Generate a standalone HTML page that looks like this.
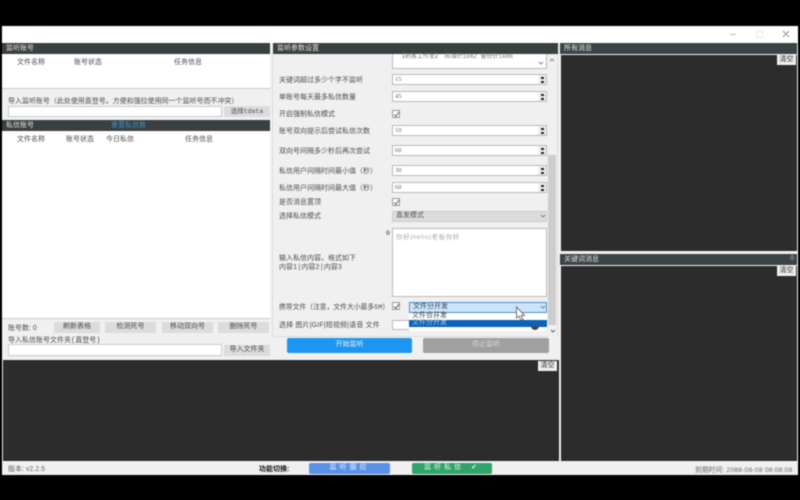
<!DOCTYPE html>
<html lang="zh"><head><meta charset="utf-8"><title>监听</title>
<style>
html,body{margin:0;padding:0;background:#000}
body{width:800px;height:500px;overflow:hidden;position:relative;font-family:"Liberation Mono","Noto Sans CJK SC",sans-serif;font-size:7px;color:#4d4d4d}
#w{position:absolute;left:0;top:0;width:800px;height:500px;filter:blur(.5px)}
.a{position:absolute;box-sizing:border-box;white-space:nowrap}
.s{font-family:"Liberation Sans","Noto Sans CJK SC",sans-serif}
.h{background:#3a3f41;color:#e2e2e2;line-height:12px;height:11px;padding-left:4px;font-size:7px;overflow:hidden}
.white{background:#fff;border:1px solid #ccc}
.btn{background:#dcdcdc;color:#4d4d4d;text-align:center;line-height:11px;height:11px}
.dark{background:#2c2c2c}
.in{background:#fff;border:1px solid #bbb;height:11px;line-height:9px;padding-left:2px;color:#666;font-size:6.5px;left:392px;width:155px;font-family:"Liberation Serif",serif}
.in:before{content:"";position:absolute;right:0;top:0;width:8px;height:9px;background:#eee}
.in:after{content:"";position:absolute;right:2px;top:1.5px;width:3px;height:2px;background:#222;box-shadow:0 4px 0 #222}
.lb{left:279px;color:#4d4d4d;font-size:7px;line-height:9px;margin-top:1px}
.cb{left:392px;width:8px;height:8px;background:#fff;border:1px solid #999}
.cb svg{position:absolute;left:0;top:0}
.clr{background:#eee;color:#333;text-align:center;width:19px;height:10px;line-height:10px}
</style></head><body><div id="w">
<div class="a" style="left:2px;top:26px;width:796px;height:449px;background:#f0f0f0"></div>
<div class="a" style="left:2px;top:26px;width:796px;height:17px;background:#fff"></div>
<div class="a" style="left:730px;top:34px;width:6px;height:1px;background:#bbb"></div>
<div class="a" style="left:756px;top:31px;width:7px;height:7px;border:1px solid #e8e8e8"></div>
<svg class="a" style="left:782px;top:30px" width="8" height="8"><path d="M1 1L7 7M7 1L1 7" stroke="#999" stroke-width="1"/></svg>

<!-- left -->
<div class="a h" style="left:2px;top:43px;width:268px">监听账号</div>
<div class="a" style="left:2px;top:54px;width:268px;height:35px;background:#fff;border-bottom:1px solid #ccc"></div>
<div class="a" style="left:17px;top:57px">文件名称</div>
<div class="a" style="left:74px;top:57px">账号状态</div>
<div class="a" style="left:174px;top:57px">任务信息</div>
<div class="a" style="left:8px;top:96px;font-size:7px;letter-spacing:-.02px">导入监听账号（此处使用直登号。方便和强拉使用同一个监听号而不冲突）</div>
<div class="a white" style="left:8px;top:106px;width:214px;height:11px"></div>
<div class="a btn" style="left:224px;top:106px;width:46px;font-size:6.5px">选择tdata</div>
<div class="a h" style="left:2px;top:120px;width:268px">私信账号</div>
<div class="a" style="left:111px;top:121px;line-height:11px;color:#3b8fc4">重置私信数</div>
<div class="a" style="left:2px;top:131px;width:268px;height:188px;background:#fff;border-bottom:1px solid #ccc"></div>
<div class="a" style="left:17px;top:134px">文件名称</div>
<div class="a" style="left:66px;top:134px">账号状态</div>
<div class="a" style="left:106px;top:134px">今日私信</div>
<div class="a" style="left:185px;top:134px">任务信息</div>
<div class="a s" style="left:8px;top:323px">账号数: 0</div>
<div class="a btn" style="left:54px;top:322px;width:46px">刷新表格</div>
<div class="a btn" style="left:105px;top:322px;width:51px">检测死号</div>
<div class="a btn" style="left:162px;top:322px;width:51px">移动双向号</div>
<div class="a btn" style="left:218px;top:322px;width:51px">删除死号</div>
<div class="a" style="left:8px;top:335px">导入私信账号文件夹(直登号)</div>
<div class="a white" style="left:8px;top:344px;width:214px;height:12px"></div>
<div class="a btn" style="left:224px;top:345px;width:46px">导入文件夹</div>

<!-- middle -->
<div class="a h" style="left:273px;top:43px;width:285px">监听参数设置</div>
<div class="a" style="left:272px;top:54px;width:286px;height:283px;border:1px solid #ddd;border-top:0"></div>
<div class="a" style="left:392px;top:54px;width:155px;height:15px;background:#fff;border:1px solid #bbb;border-top:0;font-size:6px;padding-left:6px;line-height:6px;color:#777">【刺客工作室】 陈瑞针1km2 备份针1km6</div>
<svg class="a" style="left:538px;top:61px" width="6" height="5"><path d="M1 1L3 3L5 1" stroke="#888" fill="none"/></svg>
<div class="a" style="left:548px;top:54px;width:9px;height:283px;background:#f0f0f0"></div>
<svg class="a" style="left:549px;top:58px" width="6" height="5"><path d="M1 3L3 1L5 3" stroke="#888" fill="none"/></svg>
<div class="a" style="left:548px;top:155px;width:8px;height:170px;background:#cdcdcd"></div>
<svg class="a" style="left:550px;top:329px" width="6" height="5"><path d="M1 1L3 3L5 1" stroke="#666" fill="none"/></svg>
<div class="a lb" style="top:76px">关键词超过多少个字不监听</div><div class="a in" style="top:74px">15</div>
<div class="a lb" style="top:93px">单账号每天最多私信数量</div><div class="a in" style="top:91px">45</div>
<div class="a lb" style="top:110px">开启强制私信模式</div>
<div class="a cb" style="top:110px"><svg width="7" height="7"><path d="M1 3.5L3 5.5L6 1" stroke="#666" fill="none"/></svg></div>
<div class="a lb" style="top:127px">账号双向提示后尝试私信次数</div><div class="a in" style="top:125px">10</div>
<div class="a lb" style="top:147px">双向号间隔多少秒后再次尝试</div><div class="a in" style="top:145px">60</div>
<div class="a lb" style="top:167px">私信用户间隔时间最小值（秒）</div><div class="a in" style="top:165px">30</div>
<div class="a lb" style="top:184px">私信用户间隔时间最大值（秒）</div><div class="a in" style="top:182px">60</div>
<div class="a lb" style="top:198px">是否消息置顶</div>
<div class="a cb" style="top:198px"><svg width="7" height="7"><path d="M1 3.5L3 5.5L6 1" stroke="#666" fill="none"/></svg></div>
<div class="a lb" style="top:212px">选择私信模式</div>
<div class="a" style="left:392px;top:211px;width:155px;height:11px;background:#dcdcdc;border:1px solid #ccc;line-height:9px;padding-left:3px;color:#555">直发模式</div>
<svg class="a" style="left:540px;top:214px" width="6" height="5"><path d="M1 1L3 3L5 1" stroke="#888" fill="none"/></svg>
<div class="a" style="left:386px;top:230px;font-size:6.5px;color:#333">0</div>
<div class="a s" style="left:392px;top:228px;width:155px;height:69px;background:#fff;border:1px solid #bbb;padding:2px 3px;color:#aaa;font-size:6.5px;letter-spacing:.6px">你好|hello|老板你好</div>
<div class="a lb" style="top:254px">输入私信内容。格式如下<br>内容1|内容2|内容3</div>
<div class="a lb" style="top:303px;font-size:6.8px">携带文件（注意，文件大小最多5M）</div>
<div class="a cb" style="top:302px"><svg width="7" height="7"><path d="M1 3.5L3 5.5L6 1" stroke="#555" fill="none"/></svg></div>
<div class="a" style="left:409px;top:302px;width:138px;height:11px;background:#cde4f7;border:1px solid #4a90d0;line-height:9px;padding-left:3px;color:#345">文件分开发</div>
<svg class="a" style="left:540px;top:305px" width="6" height="5"><path d="M1 1L3 3L5 1" stroke="#789" fill="none"/></svg>
<div class="a" style="left:409px;top:313px;width:138px;height:7px;background:#fff;line-height:7px;padding-left:3px;color:#444">文件合并发</div>
<div class="a" style="left:409px;top:320px;width:138px;height:7px;background:#0b62b8;line-height:7px;padding-left:3px;color:#bcd">文件分开发</div>
<div class="a lb s" style="top:320px;letter-spacing:.15px">选择 图片|GIF|短视频|语音 文件</div>
<div class="a" style="left:392px;top:320px;width:17px;height:10px;background:#fff;border:1px solid #bbb;border-right:0"></div>
<div class="a" style="left:409px;top:327px;width:138px;height:4px;background:#fff"></div>
<div class="a" style="left:531px;top:326px;width:8px;height:4px;background:#444;border-radius:0 0 4px 4px"></div>
<svg class="a" style="left:515px;top:306px" width="12" height="16"><path d="M1.5 1V12L4 10L6 14.5L8 13.5L6 9.5L9.5 9.5Z" fill="#fff" stroke="#555" stroke-width=".8"/></svg>
<div class="a" style="left:287px;top:338px;width:125px;height:15px;background:#1e96f0;border-radius:2px;color:#e5f2ff;text-align:center;line-height:15px">开始监听</div>
<div class="a" style="left:423px;top:338px;width:126px;height:15px;background:#a0a0a0;border-radius:2px;color:#d8d8d8;text-align:center;line-height:15px">停止监听</div>

<!-- bottom dark -->
<div class="a dark" style="left:3px;top:360px;width:556px;height:101px"></div>
<div class="a clr" style="left:538px;top:361px">清空</div>

<!-- right -->
<div class="a h" style="left:560px;top:43px;width:237px;background:#3a4345">所有消息</div>
<div class="a dark" style="left:561px;top:55px;width:236px;height:196px"></div>
<div class="a clr" style="left:777px;top:55px">清空</div>
<div class="a h" style="left:560px;top:254px;width:237px;background:#3a4345">关键词消息</div>
<div class="a" style="left:790px;top:254px;line-height:11px;color:#aaa">0</div>
<div class="a dark" style="left:561px;top:266px;width:236px;height:195px"></div>
<div class="a clr" style="left:777px;top:266px">清空</div>

<!-- status -->
<div class="a s" style="left:8px;top:464px;color:#666">版本: v2.2.5</div>
<div class="a s" style="left:259px;top:464px;color:#111;font-weight:bold">功能切换:</div>
<div class="a" style="left:309px;top:463px;width:81px;height:11px;background:#5a92ea;border-radius:2px;color:#dfeaff;text-align:center;line-height:11px;letter-spacing:3px">监听摄控</div>
<div class="a" style="left:412px;top:463px;width:80px;height:11px;background:#2fa56b;border-radius:2px;color:#e2f5ea;text-align:center;line-height:11px;letter-spacing:3px">监听私信 ✔</div>
<div class="a s" style="left:695px;top:464px;color:#666;font-size:6.6px;letter-spacing:.25px">到期时间: 2088-08-08 08:08:08</div>
</div></body></html>
